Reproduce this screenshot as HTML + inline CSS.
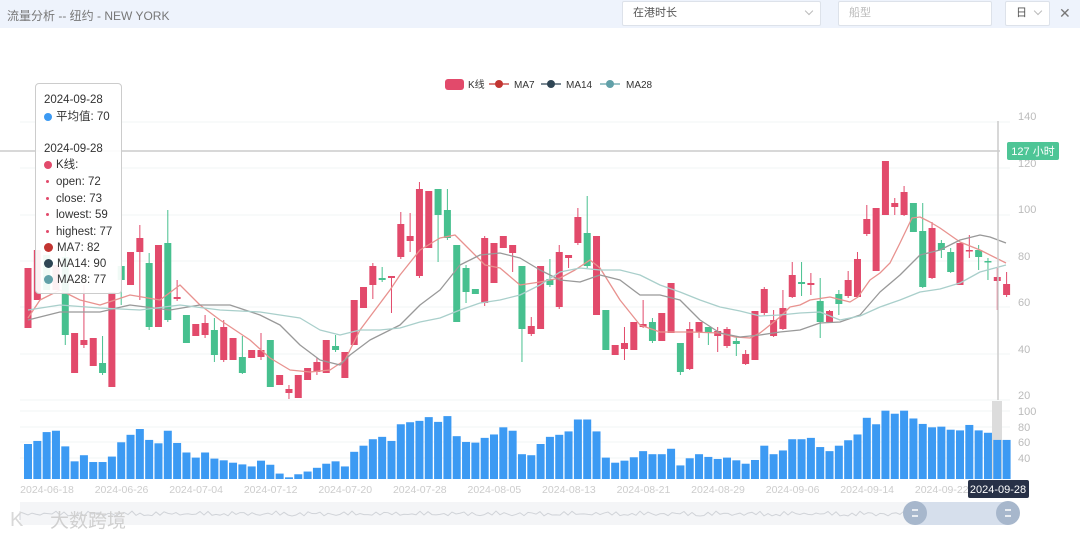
<!DOCTYPE html>
<html><head><meta charset="utf-8">
<style>
*{margin:0;padding:0;box-sizing:border-box}
body{width:1080px;height:538px;background:#fff;font-family:"Liberation Sans","Noto Sans CJK SC",sans-serif;position:relative;overflow:hidden}
.hdr{position:absolute;left:0;top:0;width:1080px;height:28px;background:#eef3fc}
.ttl{position:absolute;left:7px;top:7px;font-size:12px;color:#777}
.sel{position:absolute;top:1px;height:25px;background:#fff;border:1px solid #dde2ea;border-radius:2px;font-size:11px;line-height:23px;color:#555;padding:0 0 0 10px}
.chev{position:absolute;top:6px;width:6px;height:6px;border-right:1px solid #bbb;border-bottom:1px solid #bbb;transform:rotate(45deg)}
.tip{position:absolute;left:35px;top:83px;width:87px;height:211px;background:rgba(255,255,255,0.92);border:1px solid #ccc;border-radius:4px;font-size:11.5px;color:#333;line-height:16.5px}
.tip div{position:absolute;left:8px;white-space:nowrap}
.d{display:inline-block;border-radius:50%;vertical-align:middle;margin-right:4px}
</style></head><body>
<svg id="c" width="1080" height="538" style="position:absolute;left:0;top:0"></svg>
<div class="hdr">
<div class="ttl">流量分析 -- 纽约 - NEW YORK</div>
<div class="sel" style="left:622px;width:199px">在港时长<span class="chev" style="left:183px"></span></div>
<div class="sel" style="left:838px;width:154px;color:#bbb">船型</div>
<div class="sel" style="left:1005px;width:45px">日<span class="chev" style="left:29px"></span></div>
<div style="position:absolute;left:1059px;top:5px;font-size:14px;color:#777">✕</div>
</div>
<div class="tip">
<div style="top:8px">2024-09-28</div>
<div style="top:25px"><span class="d" style="width:8px;height:8px;background:#3c9af3"></span>平均值: 70</div>
<div style="top:57px">2024-09-28</div>
<div style="top:73px"><span class="d" style="width:8px;height:8px;background:#e24a6b"></span>K线:</div>
<div style="top:90px"><span class="d" style="width:3px;height:3px;background:#e24a6b;margin:0 7px 0 2px"></span>open: 72</div>
<div style="top:107px"><span class="d" style="width:3px;height:3px;background:#e24a6b;margin:0 7px 0 2px"></span>close: 73</div>
<div style="top:123px"><span class="d" style="width:3px;height:3px;background:#e24a6b;margin:0 7px 0 2px"></span>lowest: 59</div>
<div style="top:140px"><span class="d" style="width:3px;height:3px;background:#e24a6b;margin:0 7px 0 2px"></span>highest: 77</div>
<div style="top:156px"><span class="d" style="width:9px;height:9px;background:#c23531"></span>MA7: 82</div>
<div style="top:172px"><span class="d" style="width:9px;height:9px;background:#2f4554"></span>MA14: 90</div>
<div style="top:188px"><span class="d" style="width:9px;height:9px;background:#61a0a8"></span>MA28: 77</div>
</div>
<script>
var s='';
function L(x1,y1,x2,y2,c,w){s+='<line x1="'+x1+'" y1="'+y1+'" x2="'+x2+'" y2="'+y2+'" stroke="'+c+'" stroke-width="'+(w||1)+'"/>';}
function R(x,y,w,h,c){s+='<rect x="'+x+'" y="'+y+'" width="'+w+'" height="'+h+'" fill="'+c+'"/>';}
function T(x,y,t,c,sz,a){s+='<text x="'+x+'" y="'+y+'" fill="'+c+'" font-size="'+(sz||11)+'" text-anchor="'+(a||'start')+'" font-family="Liberation Sans,Noto Sans CJK SC,sans-serif">'+t+'</text>';}
[122,168,215,261,307,354,400].forEach(function(y){L(20,y,1010,y,'#f0f4f4');});
[411,427,442,458].forEach(function(y){L(20,y,1010,y,'#f0f4f4');});
var yl=[[140,120],[120,167],[100,213],[80,260],[60,306],[40,353],[20,399]];
yl.forEach(function(a){T(1018,a[1],a[0],'#bbb',11);});
[[100,415],[80,431],[60,446],[40,462]].forEach(function(a){T(1018,a[1],a[0],'#bbb',11);});
var v=[192,183,157,153,199,243,225,245,245,229,187,165,148,180,190,153,189,217,232,217,235,240,247,252,258,241,253,279,290,281,273,262,250,243,258,215,197,178,171,183,134,128,124,113,127,110,169,186,188,174,164,143,153,222,225,192,171,165,155,120,120,155,232,247,241,231,213,222,222,206,255,234,222,230,236,232,240,250,239,197,222,211,178,178,174,201,213,197,181,164,115,134,94,103,94,117,133,143,141,150,152,136,152,159,180,180];
R(992,401,10,78,'#dcdcdc');
v.forEach(function(z,i){var x=28+9.32*i;var y=411+(z-95)/2.94;R(x-4,y,8,479-y,'#3c9af3');});
var c=[[268,328,'r'],[250,300,'r'],[255,290,'g'],[265,290,'r'],[257,335,'g',250,345],[333,373,'r'],[340,345,'r',285,348],[338,366,'r'],[363,373,'g',336,375],[292,387,'r'],[266,280,'g',250,305],[252,285,'r'],[238,252,'r',225,300],[263,327,'g',253,330],[245,327,'r'],[243,320,'g',210,322],[297,299,'r',280,301],[315,343,'g'],[324,336,'r'],[323,335,'r',315,338],[330,355,'g',318,362],[327,360,'r',320,362],[338,360,'r'],[357,373,'g',336,374],[350,358,'r'],[350,357,'r',333,360],[340,387,'g'],[375,385,'r'],[389,393,'r',385,399],[375,398,'r'],[368,380,'r'],[362,372,'r',358,375],[340,373,'r'],[346,350,'g',335,352],[352,378,'r'],[300,345,'r'],[287,308,'r'],[266,285,'r',263,299],[278,280,'g',267,282],[276,278,'r',276,313],[224,257,'r',212,259],[236,241,'r',213,252],[189,276,'r',182,278],[191,248,'r'],[189,215,'g',189,262],[210,238,'g',189,240],[245,322,'g'],[268,292,'g',265,303],[289,294,'g'],[238,303,'r',236,306],[243,283,'r'],[236,248,'r'],[245,253,'r',245,272],[266,329,'g',266,362],[326,334,'r',317,336],[266,329,'r'],[279,285,'g',259,287],[252,307,'r',245,309],[255,258,'r',255,268],[217,243,'r',208,245],[233,266,'g',196,268],[236,315,'r'],[310,350,'g'],[345,355,'r'],[343,349,'r',327,360],[322,350,'r'],[324,327,'r',300,328],[322,341,'g',318,343],[313,341,'r'],[283,333,'r'],[343,372,'g',343,375],[329,369,'r',322,370],[322,332,'r',322,338],[327,333,'g',327,345],[331,336,'r',327,352],[329,346,'r',327,348],[341,344,'g',337,356],[354,364,'r',350,365],[311,360,'r'],[289,313,'r',287,315],[320,336,'r',310,337],[308,329,'r',290,330],[275,297,'r',262,298],[282,284,'g',262,296],[283,285,'r',273,295],[301,322,'g',278,338],[311,322,'r',310,323],[294,304,'g',290,315],[280,296,'r',271,298],[259,297,'r',252,298],[219,234,'r',205,236],[208,271,'r'],[161,215,'r'],[203,207,'r',198,215],[192,215,'r',186,216],[203,232,'g'],[231,287,'g',203,288],[228,278,'r',222,279],[243,250,'g',240,258],[252,272,'g',248,273],[243,285,'r'],[250,251,'r',235,258],[250,257,'g',245,270],[261,262,'g',258,280],[277,281,'r',268,310],[284,295,'r',272,297]];
c.forEach(function(a,i){var x=28+9.32*i;var col=a[2]=='r'?'#e24a6b':'#47c08f';
if(a[3]!==undefined)L(x,a[3],x,a[4],col);
var h=Math.max(a[1]-a[0],1.5);R(x-3.5,a[0],7,h,col);});
function P(pts,col,w){s+='<polyline fill="none" stroke="'+col+'" stroke-width="'+w+'" stroke-linejoin="round" points="'+pts+'"/>';}
P("28,318 40,300 60,290 80,300 100,305 130,295 160,300 180,285 200,305 220,320 250,340 270,358 290,370 310,372 330,370 345,360 360,330 375,310 390,290 400,275 420,250 440,238 455,235 470,250 485,265 500,268 520,285 540,282 560,278 575,270 590,260 600,268 620,300 640,325 660,332 690,332 720,333 735,337 750,338 760,333 770,325 780,317 790,307 800,305 810,300 830,297 850,302 858,297 870,280 880,273 890,263 900,243 912,218 920,217 930,222 940,228 960,242 980,250 1006,263","#e8928f",1.3);
P("28,320 60,312 100,312 130,305 170,310 200,305 230,305 260,315 280,325 300,345 320,360 340,365 350,355 370,340 400,325 420,305 440,290 460,265 480,255 500,253 520,258 540,270 560,280 580,282 600,275 620,280 640,295 660,295 680,300 700,320 720,333 740,337 760,335 780,332 800,330 820,323 840,322 860,315 880,292 900,275 920,255 940,250 960,240 980,235 990,237 1006,243","#999",1.3);
P("28,310 60,305 100,308 140,310 180,305 220,310 260,312 300,318 320,330 340,335 360,330 380,330 400,328 420,322 440,318 460,310 480,303 500,300 520,295 540,285 560,272 580,268 600,270 620,270 640,275 660,285 680,292 700,300 720,307 740,311 760,316 780,315 800,313 820,312 840,320 860,316 880,307 900,300 920,292 940,289 960,283 980,272 1006,265","#a9cfcb",1.3);
L(0,151,1000,151,'#ccc',1.5);
L(998,121,998,400,'#ccc',1.5);
s+='<rect x="1007" y="142" width="52" height="18" rx="2" fill="#4ec596"/>';
T(1033,155,'127 小时','#fff',11,'middle');
['2024-06-18','2024-06-26','2024-07-04','2024-07-12','2024-07-20','2024-07-28','2024-08-05','2024-08-13','2024-08-21','2024-08-29','2024-09-06','2024-09-14','2024-09-22'].forEach(function(t,i){T(47+74.56*i,493,t,'#ccc',10.5,'middle');});
s+='<rect x="968" y="480" width="61" height="18" rx="2" fill="#283147"/>';
T(998,493,'2024-09-28','#fff',11,'middle');
s+='<rect x="445" y="79" width="19" height="11" rx="3" fill="#e24a6b"/>';T(468,88,'K线','#333',10);
[[489,514,'MA7','#c23531'],[541,566,'MA14','#2f4554'],[600,626,'MA28','#61a0a8']].forEach(function(a){L(a[0],84,a[0]+20,84,a[3],1.2);s+='<circle cx="'+(a[0]+10)+'" cy="84" r="4" fill="'+a[3]+'"/>';T(a[1],88,a[2],'#333',10);});
R(20,502,990,23,'#f4f5f7');
var d='M20,520';for(var x=20;x<=1008;x+=4){d+=' L'+x+','+(516-Math.abs(Math.sin(x*0.7)*3+Math.sin(x*0.13)*2));}
s+='<path d="'+d+'" fill="none" stroke="#d0d3d8" stroke-width="1"/>';
R(915,502,93,23,'#d6dfec');
[915,1008].forEach(function(x){s+='<circle cx="'+x+'" cy="513" r="12" fill="#a7b7cc"/>';L(x-3,510,x+3,510,'#fff',1.5);L(x-3,516,x+3,516,'#fff',1.5);});
T(10,526,'K','#d8d8d8',20);T(50,527,'大数跨境','#d0d0d0',19);
document.getElementById('c').innerHTML=s;
</script>
</body></html>
